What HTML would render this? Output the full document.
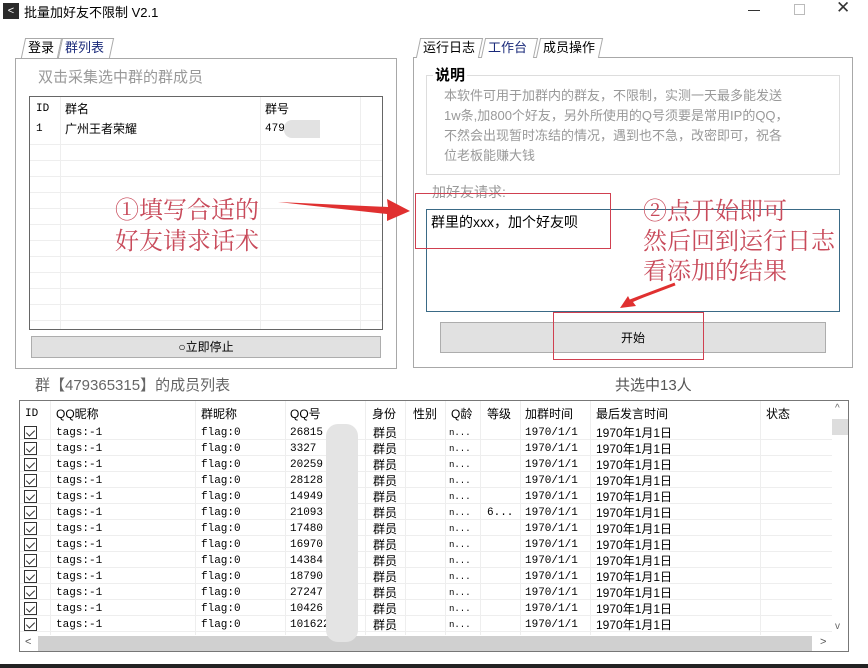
<!DOCTYPE html>
<html><head><meta charset="utf-8"><style>
*{margin:0;padding:0;box-sizing:border-box}
body{width:868px;height:668px;background:#fff;position:relative;overflow:hidden;font-family:"Liberation Sans","Noto Sans CJK SC",sans-serif;color:#000}
.a{position:absolute;white-space:nowrap}
.g{color:#8a8a8a}
.tab{position:absolute;height:20px;border:1px solid #aaa;border-bottom:none;background:#fff;font-size:13px;line-height:18px;padding:0 4px;white-space:nowrap;transform:skewX(-12deg)}
.tab span{display:inline-block;transform:skewX(12deg)}
.box{position:absolute;border:1px solid #a8a8a8}
.btn{position:absolute;background:#e1e1e1;border:1px solid #adadad;font-size:12px;text-align:center}
.red{position:absolute;border:1.5px solid #d04050}
.ann{position:absolute;color:#c84a5a;font-family:"Noto Serif CJK SC",serif;white-space:nowrap}
.mono{font-family:"Liberation Mono","Noto Sans CJK SC",monospace;font-size:11px;line-height:14px}
.t{font-size:12px;line-height:14px}
.cb{position:absolute;left:24px;width:13px;height:13px;border:1px solid #333;background:#fff}
.cb:after{content:"";position:absolute;left:3px;top:1px;width:4px;height:7px;border:solid #333;border-width:0 1.5px 1.5px 0;transform:rotate(45deg)}
</style></head><body>
<!-- title -->
<div class="a" style="left:3px;top:3px;width:16px;height:16px;background:#2b2b2b;color:#fff;font-size:11px;text-align:center;line-height:16px">&lt;</div>
<div class="a" style="left:24px;top:2px;font-size:13px">批量加好友不限制 V2.1</div>
<div class="a" style="left:748px;top:10px;width:12px;height:1px;background:#333"></div>
<div class="a" style="left:794px;top:4px;width:11px;height:11px;border:1px solid #bbb"></div>
<div class="a" style="left:836px;top:-2px;font-size:17px;color:#333">✕</div>

<!-- left panel -->
<div class="box" style="left:15px;top:58px;width:382px;height:311px"></div>
<div class="tab" style="left:23px;top:38px;width:37px"><span>登录</span></div>
<div class="tab" style="left:60px;top:38px;width:52px;color:#1a2a7a"><span>群列表</span></div>
<div class="a" style="left:38px;top:66px;font-size:15px;color:#999">双击采集选中群的群成员</div>
<div class="box" style="left:29px;top:96px;width:354px;height:234px;border-color:#666;background:repeating-linear-gradient(#fff 0 15px,#eee 15px 16px)">
 <div style="position:absolute;left:0;top:0;width:100%;height:40px;background:#fff"></div>
 <div style="position:absolute;left:30px;top:0;bottom:0;width:1px;background:#eee"></div>
 <div style="position:absolute;left:230px;top:0;bottom:0;width:1px;background:#eee"></div>
 <div style="position:absolute;left:330px;top:0;bottom:0;width:1px;background:#eee"></div>
 <div class="a mono" style="left:6px;top:5px">ID</div>
 <div class="a t" style="left:35px;top:5px">群名</div>
 <div class="a t" style="left:235px;top:5px">群号</div>
 <div class="a mono" style="left:6px;top:25px">1</div>
 <div class="a t" style="left:35px;top:25px">广州王者荣耀</div>
 <div class="a mono" style="left:235px;top:25px">479</div>
 <div class="a" style="left:254px;top:23px;width:36px;height:18px;background:#e2e2e2;border-radius:8px 0 0 8px"></div>
</div>
<div class="btn" style="left:31px;top:336px;width:350px;height:22px;line-height:20px">○立即停止</div>

<!-- right panel -->
<div class="box" style="left:413px;top:57px;width:440px;height:311px"></div>
<div class="tab" style="left:418px;top:38px;width:63px"><span>运行日志</span></div>
<div class="tab" style="left:483px;top:38px;width:53px;color:#1a2a7a"><span>工作台</span></div>
<div class="tab" style="left:538px;top:38px;width:63px"><span>成员操作</span></div>
<div class="box" style="left:426px;top:75px;width:414px;height:100px;border-color:#ddd"></div>
<div class="a" style="left:433px;top:64px;font-size:15px;font-weight:bold;background:#fff;padding:0 2px">说明</div>
<div class="a" style="left:444px;top:86px;font-size:13px;line-height:20px;color:#999">本软件可用于加群内的群友，不限制，实测一天最多能发送<br>1w条,加800个好友，另外所使用的Q号须要是常用IP的QQ，<br>不然会出现暂时冻结的情况，遇到也不急，改密即可，祝各<br>位老板能赚大钱</div>
<div class="a" style="left:432px;top:182px;font-size:14px;color:#999">加好友请求:</div>
<div class="box" style="left:426px;top:209px;width:414px;height:103px;border-color:#3a6a86"></div>
<div class="a" style="left:431px;top:212px;font-size:14px">群里的xxx，加个好友呗</div>
<div class="btn" style="left:440px;top:322px;width:386px;height:31px;line-height:30px">开始</div>
<div class="red" style="left:415px;top:193px;width:196px;height:56px"></div>
<div class="red" style="left:553px;top:312px;width:151px;height:48px"></div>

<!-- annotations -->
<div class="ann" style="left:115px;top:192px;font-size:24px;line-height:31px">①填写合适的<br>好友请求话术</div>
<div class="ann" style="left:643px;top:194px;font-size:24px;line-height:30px">②点开始即可<br>然后回到运行日志<br>看添加的结果</div>
<svg class="a" style="left:0;top:0" width="868" height="668">
 <polygon points="278,202 388,207 387,199 410,211 387,221 387,214" fill="#e03030"/>
 <polygon points="675,283 630,300 628,296 620,308 636,306 633,302" fill="#e03030"/>
 <line x1="675" y1="284" x2="630" y2="301" stroke="#e03030" stroke-width="3"/>
</svg>

<!-- member list -->
<div class="a" style="left:35px;top:374px;font-size:15px;color:#666">群【479365315】的成员列表</div>
<div class="a" style="left:615px;top:374px;font-size:15px;color:#555">共选中13人</div>
<div class="box" style="left:19px;top:400px;width:830px;height:252px;border-color:#777;overflow:hidden">
 <div style="position:absolute;left:0;top:23px;width:812px;height:211px;background:repeating-linear-gradient(#fff 0 15px,#eee 15px 16px)"></div>
 <div style="position:absolute;left:30px;top:0;height:234px;width:1px;background:#eee"></div>
 <div style="position:absolute;left:175px;top:0;height:234px;width:1px;background:#eee"></div>
 <div style="position:absolute;left:265px;top:0;height:234px;width:1px;background:#eee"></div>
 <div style="position:absolute;left:345px;top:0;height:234px;width:1px;background:#eee"></div>
 <div style="position:absolute;left:385px;top:0;height:234px;width:1px;background:#eee"></div>
 <div style="position:absolute;left:425px;top:0;height:234px;width:1px;background:#eee"></div>
 <div style="position:absolute;left:460px;top:0;height:234px;width:1px;background:#eee"></div>
 <div style="position:absolute;left:500px;top:0;height:234px;width:1px;background:#eee"></div>
 <div style="position:absolute;left:570px;top:0;height:234px;width:1px;background:#eee"></div>
 <div style="position:absolute;left:740px;top:0;height:234px;width:1px;background:#eee"></div>
 <div style="position:absolute;left:812px;top:0;width:16px;height:234px;background:#fff"></div>
 <div style="position:absolute;left:812px;top:18px;width:16px;height:16px;background:#ddd"></div>
 <div class="a" style="left:815px;top:2px;font-size:10px;color:#666">^</div>
 <div class="a" style="left:815px;top:220px;font-size:10px;color:#666">v</div>
 <div style="position:absolute;left:0;top:234px;width:828px;height:17px;background:#fff"></div>
 <div style="position:absolute;left:18px;top:235px;width:774px;height:15px;background:#d0d0d0"></div>
 <div class="a" style="left:5px;top:235px;font-size:11px;color:#555">&lt;</div>
 <div class="a" style="left:800px;top:235px;font-size:11px;color:#555">&gt;</div>
</div>
<div class="a mono" style="left:25px;top:407px">ID</div>
<div class="a t" style="left:56px;top:407px">QQ昵称</div>
<div class="a t" style="left:201px;top:407px">群昵称</div>
<div class="a t" style="left:290px;top:407px">QQ号</div>
<div class="a t" style="left:372px;top:407px">身份</div>
<div class="a t" style="left:413px;top:407px">性别</div>
<div class="a t" style="left:451px;top:407px">Q龄</div>
<div class="a t" style="left:487px;top:407px">等级</div>
<div class="a t" style="left:525px;top:407px">加群时间</div>
<div class="a t" style="left:596px;top:407px">最后发言时间</div>
<div class="a t" style="left:766px;top:407px">状态</div>
<div id="rows"></div>
<div class="a" style="left:326px;top:424px;width:32px;height:218px;background:#e4e4e4;border-radius:12px"></div>
<div class="a" style="left:0;top:664px;width:868px;height:4px;background:#222"></div>
<script>
var q=["26815","3327","20259","28128","14949","21093","17480","16970","14384","18790","27247","10426","101622"];
var h="";
for(var i=0;i<13;i++){var y=425+i*16;
h+='<div class="cb" style="top:'+(y+1)+'px"></div>'+
'<div class="a mono" style="left:56px;top:'+(y+1)+'px">tags:-1</div>'+
'<div class="a mono" style="left:201px;top:'+(y+1)+'px">flag:0</div>'+
'<div class="a mono" style="left:290px;top:'+(y+1)+'px">'+q[i]+'</div>'+
'<div class="a t" style="left:373px;top:'+(y+1)+'px">群员</div>'+
'<div class="a mono" style="left:449px;top:'+(y+1)+'px;font-size:9px">n...</div>'+
(i==5?'<div class="a mono" style="left:487px;top:'+(y+1)+'px">6...</div>':'')+
'<div class="a mono" style="left:525px;top:'+(y+1)+'px">1970/1/1</div>'+
'<div class="a t" style="left:596px;top:'+(y+1)+'px">1970年1月1日</div>';}
document.getElementById("rows").innerHTML=h;
</script>
</body></html>
